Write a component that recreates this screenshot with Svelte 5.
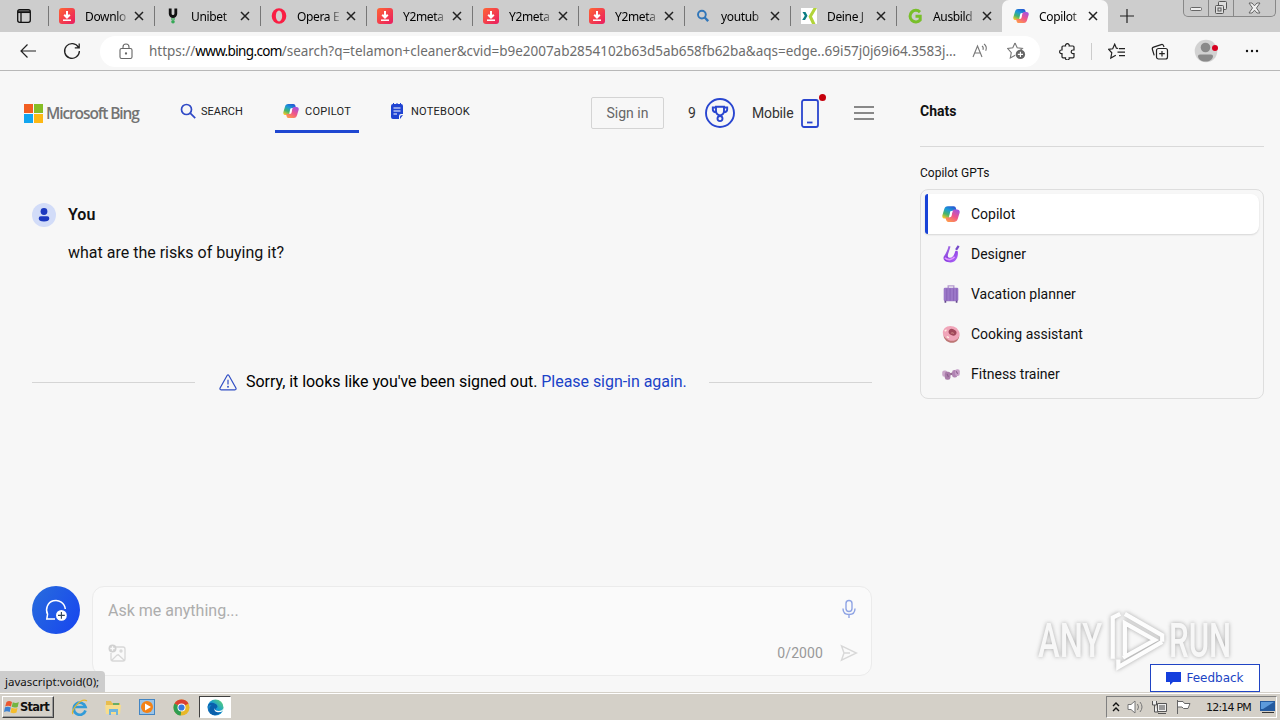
<script>
  const tabs = [
    { icon: 'download', title: 'Downlo' },
    { icon: 'unibet', title: 'Unibet' },
    { icon: 'opera', title: 'Opera E' },
    { icon: 'download', title: 'Y2meta' },
    { icon: 'download', title: 'Y2meta' },
    { icon: 'download', title: 'Y2meta' },
    { icon: 'search', title: 'youtub' },
    { icon: 'xing', title: 'Deine J' },
    { icon: 'g', title: 'Ausbild' },
    { icon: 'copilot', title: 'Copilot' }
  ];

  const gpts = [
    { icon: 'copilot', name: 'Copilot' },
    { icon: 'designer', name: 'Designer' },
    { icon: 'suitcase', name: 'Vacation planner' },
    { icon: 'donut', name: 'Cooking assistant' },
    { icon: 'dumbbell', name: 'Fitness trainer' }
  ];

  let activeTab = $state(9);
  let activeGpt = $state(0);
  let message = $state('');
</script>

{#snippet icon(name, size)}
  <svg class="icon" width={size} height={size} viewBox="0 0 16 16" fill="none">
    {#if name === 'download'}
      <rect width="16" height="16" rx="3" fill="url(#red)" />
      <path d="M8 3v6M5.2 6.7 8 9.5l2.8-2.8" stroke="#fff" stroke-width="2" />
      <path d="M4 12.2h8" stroke="#fff" stroke-width="1.5" />
    {:else if name === 'unibet'}
      <path d="M5.2.5v5.2a2.8 2.8 0 0 0 5.600 0V.5" stroke="#111" stroke-width="2.8" />
      <path d="M6 11h4" stroke="#36a957" stroke-width="1.3" />
      <circle cx="8" cy="13.8" r="1.8" fill="#36a957" />
    {:else if name === 'opera'}
      <ellipse cx="8" cy="8" rx="7.3" ry="7.7" fill="#fa1e43" />
      <ellipse cx="8" cy="8" rx="3.2" ry="5.4" fill="#d5cdcd" />
    {:else if name === 'search'}
      <circle cx="6.9" cy="6.6" r="3.9" stroke="#3176b9" stroke-width="1.9" />
      <path d="m9.7 9.5 3.5 3.6" stroke="#3176b9" stroke-width="2.4" />
    {:else if name === 'xing'}
      <path d="M0 0h16v16H0z" fill="#fff" />
      <path d="M1.5 4h3l2 3.8L4 12H1.2l2.6-4.2z" fill="#0a7d83" />
      <path d="M12.5 0H16l-5 8.4 3.5 7.6H11L7.5 8.4z" fill="#b2d43a" />
    {:else if name === 'g'}
      <path d="M13 4.1A5.8 5.8 0 1 0 13.2 12V8.3H8.5" stroke="#78bf2a" stroke-width="3" />
    {:else if name === 'copilot'}
      <path d="M5.2 1h5.1c1.3 0 1.8.7 2.1 1.8L13 5H9.7c-1.2 0-1.7.6-2 1.7l-1 3.7c-.3 1.1-1 1.6-2.2 1.6H2.6C.7 12-.1 10.7.4 8.9l1.5-5C2.5 1.9 3.3 1 5.2 1z" fill="url(#cool)" />
      <path d="M10.8 15H5.7c-1.3 0-1.8-.7-2.1-1.8L3 11h3.3c1.2 0 1.7-.6 2-1.7l1-3.7c.3-1.1 1-1.6 2.2-1.6h1.9c1.9 0 2.7 1.3 2.2 3.1l-1.5 5c-.6 2-1.4 2.9-3.3 2.9z" fill="url(#warm)" />
      <path d="m7.4 5.5 2-.2-1.2 5.1-2 .3z" fill="#fff" />
    {:else if name === 'designer'}
      <path d="M5.8.8 7.6 1.4 5.4 8c-.8 2.4.2 3.6 2 3.4 2.6-.3 3.4-2.9 4.6-6.3l2 .4c.8 4.6-1.3 10-6.4 10-4.4 0-7.4-2.6-5.9-5.4C3.3 7.5 5 4.6 5.8.8z" fill="url(#violet)" />
      <path d="m14.8.8-2.3 3.5" stroke="#7549ca" stroke-width="2" />
      <path d="M2.6 11.5c2.4 2.3 6.4 2 8.6-1" stroke="#df96ff" stroke-width="1.5" />
    {:else if name === 'suitcase'}
      <path d="M5.5 3V.8h5V3" stroke="#b59bcf" stroke-width="1.2" />
      <rect x="1.5" y="2.4" width="13" height="12" rx="1.2" fill="#9b78c8" />
      <path d="M4.2 3v11M7.2 3v11M10.2 3v11M13 3v11" stroke="#8c66ba" stroke-width="1" />
      <path d="M3 14v1.7M13 14v1.7" stroke="#64488a" stroke-width="1.5" />
    {:else if name === 'donut'}
      <ellipse cx="8.8" cy="9.2" rx="7" ry="6.3" fill="#bd7775" transform="rotate(20 8 8)" />
      <ellipse cx="8" cy="7.4" rx="7.6" ry="6.4" fill="#f0a5b9" transform="rotate(20 8 8)" />
      <ellipse cx="8.6" cy="6" rx="3.6" ry="2.8" fill="#a0475a" transform="rotate(25 8 8)" />
      <path d="M8 7.4c.8-.8 2-.5 2.400.4" stroke="#c98080" stroke-width="1" />
      <path d="M2.4 5.5 4 4.2M4.2 10.3l2 .9" stroke="#fff0e3" stroke-width="1.2" />
    {:else if name === 'dumbbell'}
      <path d="m3 9 10-2" stroke="#947193" stroke-width="2" />
      <rect x=".2" y="4.8" width="4.6" height="5.6" rx="1.8" fill="#c9a5c8" />
      <rect x="2.5" y="6" width="5" height="7" rx="2" fill="#a97ba9" />
      <rect x="9" y="4.5" width="4.6" height="6.6" rx="2" fill="#b083b2" />
      <rect x="11.6" y="3.8" width="4.2" height="6" rx="1.8" fill="#c69fc7" />
      <path d="m4.5 8 1.2 2.6M12.5 5.5 14 7.8" stroke="#8b5f8c" />
    {/if}
  </svg>
{/snippet}

<svg class="defs" aria-hidden="true">
  <defs>
    <linearGradient id="red" x1="0" y1="0" x2="1" y2="1">
      <stop stop-color="#ff6534" /><stop offset="1" stop-color="#e91c62" />
    </linearGradient>
    <linearGradient id="cool" x1=".7" y1="0" x2=".2" y2="1">
      <stop stop-color="#2458d3" /><stop offset=".35" stop-color="#1c9bd7" />
      <stop offset=".68" stop-color="#45b46b" /><stop offset="1" stop-color="#f5c928" />
    </linearGradient>
    <linearGradient id="warm" x1=".8" y1="0" x2=".2" y2="1">
      <stop stop-color="#a451e0" /><stop offset=".5" stop-color="#ef558a" /><stop offset="1" stop-color="#ff9c4b" />
    </linearGradient>
    <linearGradient id="violet" x1="0" y1="0" x2="1" y2="1">
      <stop stop-color="#b68bea" /><stop offset=".5" stop-color="#883bdf" /><stop offset="1" stop-color="#b870ff" />
    </linearGradient>
    <linearGradient id="edge" x1="0" y1="1" x2="1" y2="0">
      <stop stop-color="#1457a7" /><stop offset=".5" stop-color="#159bd7" /><stop offset="1" stop-color="#67db63" />
    </linearGradient>
  </defs>
</svg>

<div class="screen">
  <div class="tabstrip">
    <button class="workspace" aria-label="Tab actions">
      <svg width="16" height="16" viewBox="0 0 16 16" fill="none" stroke="#111" stroke-width="1.3">
        <rect x="1.7" y="1.7" width="12.6" height="12.6" rx="2" />
        <path d="M2 3.2h12M5 5v9" /><path d="M2 4.4h12" />
      </svg>
    </button>
    {#each tabs as tab, i}
      <div class="tab" class:active={i === activeTab}>
        <button class="tab-label" onclick={() => (activeTab = i)}>
          {@render icon(tab.icon, 16)}
          <span>{tab.title}</span>
        </button>
        <svg class="close" width="10" height="10" viewBox="0 0 10 10"><path d="m1 1 8 8m0-8L1 9" stroke="#222" stroke-width="1.5" /></svg>
      </div>
    {/each}
    <svg class="new-tab" width="14" height="14" viewBox="0 0 14 14"><path d="M7 0v14M0 7h14" stroke="#222" stroke-width="1.2" /></svg>
    <div class="window-buttons">
      <span><svg width="12" height="12" viewBox="0 0 12 12" fill="#eee" stroke="#666"><rect x=".5" y="5.5" width="11" height="3" rx="1" /></svg></span>
      <span><svg width="14" height="14" viewBox="0 0 14 14" fill="#ddd" stroke="#555"><rect x="4.5" y=".5" width="8" height="8" rx="1" /><rect x="1.5" y="4.5" width="8" height="8" rx="1" /><rect x="4" y="7" width="3" height="3" /></svg></span>
      <span><svg width="13" height="12" viewBox="0 0 13 12" fill="#eee" stroke="#666"><path d="M1 1h3l2.5 2.8L9 1h3L8.5 6l3.5 5H9L6.5 8.2 4 11H1l3.5-5z" /></svg></span>
    </div>
  </div>

  <div class="toolbar">
    <svg class="back" width="16" height="14" viewBox="0 0 16 14" fill="none" stroke="#222" stroke-width="1.2"><path d="M16 7H1M7.5.5 1 7l6.5 6.5" /></svg>
    <svg class="reload" width="18" height="18" viewBox="0 0 18 18" fill="none" stroke="#222" stroke-width="1.3"><path d="M15.5 5.4A7.4 7.4 0 1 0 16.4 9M16.2 1.5v4.4h-4.4" /></svg>
    <div class="address">
      <svg width="14" height="17" viewBox="0 0 14 17" fill="none" stroke="#666" stroke-width="1.1"><rect x="1" y="5.5" width="12" height="10" rx="1.6" /><path d="M4 5.5V4a3 3 0 0 1 6 0v1.5" /><circle cx="7" cy="10.5" r=".6" fill="#666" /></svg>
      <span class="url">https://<b>www.bing.com</b>/search?q=telamon+cleaner&amp;cvid=b9e2007ab2854102b63d5ab658fb62ba&amp;aqs=edge..69i57j0j69i64.3583j...</span>
      <svg class="read" width="17" height="16" viewBox="0 0 17 16" fill="none" stroke="#777" stroke-width="1.1"><path d="m1 14 4.5-11L10 14M2.7 10h5.6M10 3c1.3.9 1.5 2.3 1 3.8M12 1c2.4 1.8 2.8 4.2 1.7 6.7" /></svg>
      <svg class="star" width="19" height="18" viewBox="0 0 19 18" fill="none" stroke="#777" stroke-width="1.1"><path d="m8 1 2.2 4.7 5.2.7-3.8 3.5M8.2 13.2 3.3 16l1-5.4L.7 6.5l5.1-.8L8 1" /><circle cx="13.4" cy="12.4" r="4.7" fill="#666" stroke="none" /><path d="M13.4 9.8V15m-2.6-2.6H16" stroke="#fff" /></svg>
    </div>
    <svg class="puzzle" width="17" height="17" viewBox="0 0 17 17" fill="none" stroke="#222" stroke-width="1.2"><path d="M4 3h2.5a1.9 1.9 0 1 1 3.7 0H14q1 0 1 1v3h-1a1.8 1.8 0 1 0 0 3.6h1v3.2q0 1-1 1h-3.8a1.9 1.9 0 1 1-3.7 0H4q-1 0-1-1v-3.2h-.6a1.8 1.8 0 1 1 0-3.6H3V4q0-1 1-1z" /></svg>
    <i class="rule"></i>
    <svg class="favorites" width="18" height="17" viewBox="0 0 18 17" fill="none" stroke="#222" stroke-width="1.2"><path d="M10.2 5.5 8.4 5.2 6.7 1.2 4.7 5.8l-4 .5 3.1 3.5-1 5.2 5-2.7M11 5.7h6M9.5 9.2H17M11 12.7h6" /></svg>
    <svg class="collections" width="18" height="17" viewBox="0 0 18 17" fill="none" stroke="#222" stroke-width="1.2"><rect x="5.5" y="5.5" width="11" height="10.5" rx="2" /><path d="M11 8v5.5M8.2 10.7h5.6M3.2 12.4 1.4 6.5c-.4-1.2 0-2 1.2-2.4l7.6-2.5c1-.3 1.9 0 2.3 1L13 4" /></svg>
    <svg class="profile" width="24" height="24" viewBox="0 0 24 24"><circle cx="12" cy="12" r="11.3" fill="#d2d2d2" /><circle cx="11.5" cy="8.5" r="4.8" fill="#8a8a8a" /><path d="M4 17q0-1.5 2-1.5h11q2 0 2 1.5c0 3.500-3.500 5.500-7.500 5.500S4 20.500 4 17" fill="#8a8a8a" /><circle cx="21" cy="9" r="3" fill="#d70020" /></svg>
    <svg class="more" width="14" height="4" viewBox="0 0 14 4" fill="#111"><circle cx="2" cy="2" r="1.2" /><circle cx="7" cy="2" r="1.2" /><circle cx="12" cy="2" r="1.2" /></svg>
  </div>

  <div class="page">
    <main>
      <header>
        <div class="logo">
          <svg width="19" height="19" viewBox="0 0 19 19"><path d="M0 0h9v9H0z" fill="#f25e21" /><path d="M10 0h9v9h-9z" fill="#86bd24" /><path d="M0 10h9v9H0z" fill="#12a5ef" /><path d="M10 10h9v9h-9z" fill="#fdb813" /></svg>
          <span>Microsoft Bing</span>
        </div>
        <nav>
          <a class="nav-search" href="#search">
            <svg width="16" height="16" viewBox="0 0 16 16" fill="none" stroke="#304ac6" stroke-width="1.7"><circle cx="6.5" cy="6.5" r="5" /><path d="m10.2 10.2 5 5" /></svg>
            <span>SEARCH</span>
          </a>
          <a class="nav-copilot" href="#copilot">{@render icon('copilot', 16)}<span>COPILOT</span></a>
          <a class="nav-notebook" href="#notebook">
            <svg width="14" height="17" viewBox="0 0 14 17"><path d="M1 3q0-2 2-2h8q2 0 2 2v8h-2q-2 0-2 2v3H3q-2 0-2-2z" fill="#1f43d2" /><path d="M10 16v-2q0-2 3-2z" fill="#1f43d2" /><path d="M3.5 0v2M7 0v2M10.5 0v2" stroke="#1f43d2" /><path d="M3.5 5h7M3.5 8h7M3.5 11h3.5" stroke="#fff" stroke-width="1.2" /></svg>
            <span>NOTEBOOK</span>
          </a>
        </nav>
        <button class="signin">Sign in</button>
        <span class="points">9</span>
        <svg class="trophy" width="30" height="30" viewBox="0 0 30 30" fill="none" stroke="#2946d0" stroke-width="1.9"><circle cx="15" cy="15" r="14" /><path d="M11 8.8h8v4q0 4-4 4.6-4-.6-4-4.6zM11 9.5H7.8v2q0 2.5 3.7 3M19 9.5h3.2v2q0 2.5-3.7 3M15 17v2" /><circle cx="15" cy="20.6" r="2.5" /></svg>
        <span class="mobile">Mobile</span>
        <div class="phone">
          <svg width="18" height="29" viewBox="0 0 18 29" fill="none" stroke="#2a45ce" stroke-width="1.8"><rect x="1" y="1" width="16" height="27" rx="2" /><path d="M6 23.5h5.5" /></svg>
          <i></i>
        </div>
        <div class="menu"><i></i><i></i><i></i></div>
      </header>

      <section class="message">
        <div class="author">
          <svg width="24" height="24" viewBox="0 0 24 24"><circle cx="12" cy="12" r="12" fill="#d2dcf8" /><g fill="#1b38bf"><circle cx="12" cy="8.5" r="3.4" /><path d="M6.7 15.3q0-2 2-2h6.6q2 0 2 2 0 3.2-5.3 3.2t-5.3-3.2" /></g></svg>
          <h2>You</h2>
        </div>
        <p>what are the risks of buying it?</p>
      </section>

      <div class="notice">
        <hr />
        <svg width="18" height="17" viewBox="0 0 18 17" fill="none" stroke="#304ec4" stroke-width="1.2"><path d="M8.1 1.5q.9-1.4 1.8 0l7 12.5q.7 1.6-1 1.8H2.1q-1.7-.2-1-1.8zM9 5.8v4.8" /><circle cx="9" cy="12.8" r=".4" /></svg>
        <p><span>Sorry, it looks like you've been signed out.</span> <a href="#signin">Please sign-in again.</a></p>
        <hr />
      </div>

      <div class="composer">
        <button class="new-topic" aria-label="New topic">
          <svg width="24" height="24" viewBox="0 0 24 24" fill="none" stroke="#fff" stroke-width="1.5"><path d="M11 21H2.800l.8-4.800A9.400 9.400 0 1 1 21.300 11" /><circle cx="17.4" cy="17.4" r="5.4" fill="#fff" stroke="none" /><path d="M17.4 14v6.8M14 17.4h6.8" stroke="#345" stroke-width="1.1" /></svg>
        </button>
        <div class="input-box">
          <div class="input-row">
            <input placeholder="Ask me anything..." bind:value={message} />
            <svg class="mic" width="16" height="20" viewBox="0 0 16 20" fill="none" stroke="#8fa4e4" stroke-width="1.4"><rect x="5" y="1.5" width="6" height="11" rx="3" /><path d="M2 9.5q0 6 6 6t6-6M8 15.5V19" /></svg>
          </div>
          <div class="input-row">
            <svg width="18" height="18" viewBox="0 0 18 18" fill="none" stroke="#d8d8d8" stroke-width="1.3"><path d="M8 3h7q2 0 2 2v10q0 2-2 2H5q-2 0-2-2V9M4 16l5-5 1.3-.2L16 16" /><circle cx="13" cy="7" r="1" /><circle cx="4.5" cy="4.5" r="4" fill="#d1d1d1" stroke="none" /><path d="M4.5 2.3v4.4M2.3 4.5h4.4" stroke="#fafafa" /></svg>
            <span class="count">{message.length}/2000</span>
            <svg width="18" height="18" viewBox="0 0 18 18" fill="none" stroke="#d8d8d8" stroke-width="1.4"><path d="M1.5 1.8 16.5 9l-15 7.2L4 9zM4 9h6" /></svg>
          </div>
        </div>
      </div>
    </main>

    <aside>
      <h3>Chats</h3>
      <h4>Copilot GPTs</h4>
      <div class="gpts">
        {#each gpts as gpt, i}
          <button class="gpt" class:selected={i === activeGpt} onclick={() => (activeGpt = i)}>
            {@render icon(gpt.icon, 18)}
            <span>{gpt.name}</span>
          </button>
        {/each}
      </div>
    </aside>

    <div class="watermark">
      <span>ANY</span>
      <svg width="56" height="62" viewBox="0 0 60 66" fill="none" stroke="#fff" stroke-width="4.5"><path d="M4 53V9l8-4M17 49V15l32 18-34 19M17 5l40 23v7M10 54v8l47-27" /></svg>
      <span>RUN</span>
    </div>
    <button class="feedback">
      <svg width="15" height="13" viewBox="0 0 15 13"><path d="M0 0h15v10H7l-3 3v-3H0z" fill="#153fdd" /></svg>
      <span>Feedback</span>
    </button>
    <div class="status">javascript:void(0);</div>
  </div>

  <footer>
    <button class="start">
      <svg width="16" height="16" viewBox="0 0 16 16"><path d="M2.5 3Q5 1 8 3L7 7.5Q4 6 1.2 7.5z" fill="#eb5830" /><path d="M8.8 3.2q3 1.6 6-.2L13.7 8q-3 1.3-6-.2z" fill="#73b541" /><path d="M1 8.3q3-1.3 5.8.2L5.7 13Q3 11.5 0 13z" fill="#3d82d1" /><path d="M7.5 8.8q3 1.4 6 .1l-1 4.6q-3 1.4-6-.1z" fill="#f5bd2c" /></svg>
      <span>Start</span>
    </button>
    <div class="launch">
      <svg width="17" height="17" viewBox="0 0 17 17" fill="none"><path d="M14.5 11.5A6 6 0 1 1 14.5 8H4" stroke="#329bd8" stroke-width="2.7" /><path d="M2 15C-1 12 10-2 16 2" stroke="#e5b72e" stroke-width="1.3" /></svg>
      <svg width="17" height="17" viewBox="0 0 17 17"><path d="M1 2h5l1 2h8v9H1z" fill="#e8bd4e" /><path d="M8 4h6v2H8z" fill="#68ad65" /><path d="M0 6h16l-1 9H1z" fill="#f7dd8c" /><path d="M4 10h9v6h-2v-3H6v3H4z" fill="#6fb5dc" /></svg>
      <svg width="17" height="17" viewBox="0 0 17 17"><rect x=".5" y=".5" width="15" height="15" fill="#9bc4e7" stroke="#4385c3" /><circle cx="8" cy="8" r="6" fill="#f48216" /><path d="m6 4.5 6 3.5-6 3.5z" fill="#fff" /></svg>
      <svg width="17" height="17" viewBox="0 0 17 17"><circle cx="8.5" cy="8.5" r="8" fill="#e8b829" /><path d="M8.5 8.5 1.5 4.6a8 8 0 0 1 14 0z" fill="#db3f32" /><path d="M8.5 8.5 1.5 4.6a8 8 0 0 0 6.2 11.9z" fill="#2e9d52" /><circle cx="8.5" cy="8.5" r="4" fill="#fff" /><circle cx="8.5" cy="8.5" r="3.1" fill="#3878de" /></svg>
    </div>
    <div class="running">
      <svg width="17" height="17" viewBox="0 0 17 17"><circle cx="8.5" cy="8.5" r="8" fill="url(#edge)" /><path d="M.5 8q1-5 6-4 4 1 4 4l-2 2q0 3 6 3-7 6-11 1-3-4 1-8-3 0-4 2" fill="#0960ac" /><path d="M7.7 9q-.2 3 4.2 3 2.7 0 4.3-2l-.5 2q-3 2-6 1-3-1-2-4" fill="#fff" /></svg>
    </div>
    <div class="tray">
      <svg width="8" height="12" viewBox="0 0 8 12" fill="none" stroke="#111" stroke-width="1.4"><path d="m1 5 3-3 3 3M1 10l3-3 3 3" /></svg>
      <svg width="17" height="16" viewBox="0 0 17 16" fill="#fff" stroke="#777"><path d="M1 5.5h3L8 2v12L4 10.5H1z" /><path d="M10.5 5q2 3 0 6M13 3q4 5 0 10" fill="none" /></svg>
      <svg width="17" height="16" viewBox="0 0 17 16" fill="#eee" stroke="#555"><path d="M6.5 4.5h9v8h-9zM7 14.5h8M1.5 2v4h4V2M3.5 6v7h4" /><path d="M8 6h6v5H8z" fill="#999" stroke="none" /></svg>
      <svg width="17" height="16" viewBox="0 0 17 16" fill="#fff" stroke="#666"><path d="M2.5 15V1M2.5 2.5H8l1.5 2H15l-2 5H8.5L7 8H2.5z" /></svg>
      <time>12:14 PM</time>
      <svg width="15" height="13" viewBox="0 0 15 13"><path d="M0 0h15v10H0z" fill="#255b9f" /><path d="M1 1h13L3 8H1z" fill="#5d9bdc" /><path d="M2 11h12v1H2z" fill="#333" /></svg>
    </div>
  </footer>
</div>

<style>
  :global(body) {
    background: #f7f7f7;
    overflow: hidden;
  }

  * {
    box-sizing: border-box;
  }

  button {
    border: 0;
    background: none;
    padding: 0;
    font: inherit;
    color: inherit;
  }

  a {
    text-decoration: none;
    color: inherit;
  }

  h2, h3, h4, p {
    margin: 0;
  }

  svg {
    display: block;
    flex: none;
  }

  .defs {
    position: absolute;
    width: 0;
    height: 0;
  }

  .screen {
    width: 1280px;
    height: 720px;
    display: flex;
    flex-direction: column;
    overflow: hidden;
    color: #111;
    font-family: Roboto, sans-serif;
  }

  .tabstrip {
    height: 32px;
    flex: none;
    display: flex;
    background: #cdcdcd;
    font: 12px "Noto Sans", sans-serif;
  }

  .workspace {
    width: 48px;
    flex: none;
    padding: 0 0 0 16px;
  }

  .tab {
    width: 106px;
    flex: none;
    display: flex;
    align-items: center;
    background: linear-gradient(#777, #777) 0 6px / 1px 20px no-repeat;
  }

  .tab-label {
    display: flex;
    align-items: center;
    gap: 10px;
    margin-left: 11px;
    color: #000;
  }

  .tab-label span {
    width: 46px;
    text-align: left;
    white-space: nowrap;
    letter-spacing: -0.35px;
    -webkit-mask-image: linear-gradient(90deg, #000 68%, #0004 90%);
    mask-image: linear-gradient(90deg, #000 68%, #0004 90%);
  }

  .close {
    margin-left: 3px;
  }

  .tab.active {
    background: #f7f7f7;
    border-radius: 7px 7px 0 0;
  }

  .new-tab {
    margin: 9px 0 0 12px;
  }

  .window-buttons {
    display: flex;
    height: 17px;
    margin-left: auto;
    margin-right: 4px;
    border: 1px solid #888;
    border-top: 0;
    border-radius: 0 0 5px 5px;
    background: #c9c9c9;
  }

  .window-buttons span {
    width: 25px;
    display: flex;
    justify-content: center;
    align-items: center;
    border-right: 1px solid #888;
  }

  .window-buttons span:last-child {
    width: 41px;
    border: 0;
  }

  .toolbar {
    height: 39px;
    flex: none;
    display: flex;
    align-items: center;
    background: #f7f7f7;
    border-bottom: 1px solid #b8b8b8;
  }

  .back {
    margin-left: 20px;
  }

  .reload {
    margin: 0 19px 0 27px;
  }

  .address {
    width: 940px;
    height: 31px;
    display: flex;
    align-items: center;
    padding: 0 14px 0 19px;
    border-radius: 16px;
    background: #fff;
  }

  .url {
    width: 812px;
    margin-left: 16px;
    white-space: nowrap;
    color: #6d6d6d;
    font: 13.5px "Noto Sans", sans-serif;
    letter-spacing: -0.03px;
  }

  .url b {
    font-weight: normal;
    color: #000;
    letter-spacing: -0.65px;
  }

  .read {
    margin-left: 11px;
  }

  .star {
    margin-left: auto;
  }

  .puzzle {
    margin-left: 19px;
  }

  .rule {
    height: 17px;
    margin-left: 15px;
    border-left: 1px solid #ccc;
  }

  .favorites {
    margin-left: 16px;
  }

  .collections {
    margin-left: 25px;
  }

  .profile {
    margin-left: 25px;
  }

  .more {
    margin-left: 27px;
  }

  .page {
    position: relative;
    height: 621px;
    flex: none;
    display: flex;
    background: #f7f7f7;
  }

  main {
    width: 888px;
    flex: none;
    display: flex;
    flex-direction: column;
  }

  header {
    height: 62px;
    flex: none;
    display: flex;
    align-items: center;
    padding: 22px 0 0 24px;
    font-size: 14px;
    color: #333;
  }

  .logo {
    width: 156px;
    display: flex;
    align-items: center;
    gap: 3px;
    color: #737373;
    font: 600 15.5px "Open Sans", sans-serif;
    letter-spacing: -1.1px;
    white-space: nowrap;
  }

  nav {
    width: 411px;
    height: 40px;
    display: flex;
    font-size: 11px;
    letter-spacing: 0.25px;
    color: #222;
  }

  nav a {
    height: 40px;
    display: flex;
    align-items: center;
    gap: 6px;
    padding-bottom: 1px;
    border-bottom: 3px solid transparent;
  }

  .nav-search {
    width: 95px;
    gap: 5px;
    letter-spacing: 0;
  }

  .nav-copilot {
    width: 84px;
    padding-left: 8px;
    border-color: #1f47d1;
  }

  .nav-notebook {
    margin-left: 31px;
    gap: 7px;
  }

  .signin {
    width: 73px;
    height: 32px;
    border: 1px solid #d4d4d4;
    border-radius: 2px;
    color: #666;
  }

  .points {
    width: 17px;
    margin-left: 24px;
  }

  .mobile {
    width: 49px;
    margin-left: 17px;
    letter-spacing: -0.15px;
  }

  .phone {
    position: relative;
  }

  .phone i {
    position: absolute;
    width: 7px;
    height: 7px;
    right: -7px;
    top: -5px;
    border-radius: 50%;
    background: #c6000c;
  }

  .menu {
    width: 20px;
    margin-left: 35px;
    display: grid;
    gap: 4px;
  }

  .menu i {
    height: 2px;
    background: #888;
  }

  .message {
    margin: 70px 0 0 32px;
    font-size: 16px;
    line-height: 24px;
  }

  .author {
    display: flex;
    gap: 12px;
  }

  .author h2 {
    font-size: 16px;
    font-weight: 600;
  }

  .message p {
    margin: 14px 0 0 36px;
  }

  .notice {
    height: 24px;
    width: 840px;
    margin: 105px 0 0 32px;
    display: flex;
    align-items: center;
    font-size: 16px;
    color: #000;
  }

  .notice hr {
    width: 163px;
    flex: none;
    margin: 0;
    border: 0;
    border-top: 1px solid #d5d5d5;
  }

  .notice svg {
    margin-left: 24px;
  }

  .notice p {
    width: 472px;
    padding: 0 0 2px 9px;
    white-space: nowrap;
    letter-spacing: -0.04px;
  }

  .notice a {
    color: #1b43c8;
  }

  .composer {
    display: flex;
    gap: 12px;
    margin: auto 0 16px 32px;
  }

  .new-topic {
    width: 48px;
    height: 48px;
    display: grid;
    place-items: center;
    border-radius: 50%;
    background: linear-gradient(120deg, #286ddc, #1744f0);
  }

  .input-box {
    width: 780px;
    height: 90px;
    display: flex;
    flex-direction: column;
    gap: 21px;
    padding: 12px 13px 0 15px;
    border: 1px solid #ebebeb;
    border-radius: 12px;
    background: #fafafa;
  }

  .input-row {
    height: 22px;
    display: flex;
    align-items: center;
  }

  .input-row input {
    flex: 1;
    border: 0;
    padding: 0;
    outline: 0;
    background: none;
    font: 16px Roboto, sans-serif;
  }

  .input-row input::placeholder {
    color: #adadad;
  }

  .mic {
    margin: 0 1px 3px 0;
  }

  .count {
    margin-left: auto;
    margin-right: 17px;
    color: #999;
    font-size: 14px;
    letter-spacing: 0.1px;
  }

  aside {
    width: 344px;
    margin-left: 32px;
  }

  aside h3 {
    height: 76px;
    padding-top: 32px;
    border-bottom: 1px solid #d9d9d9;
    font-size: 14px;
    font-weight: 700;
    line-height: 16px;
  }

  aside h4 {
    margin: 18px 0 7px;
    font-size: 12px;
    font-weight: 400;
    line-height: 17px;
  }

  .gpts {
    height: 210px;
    padding: 4px;
    border: 1px solid #dedede;
    border-radius: 8px;
  }

  .gpt {
    width: 100%;
    height: 40px;
    display: flex;
    align-items: center;
    gap: 11px;
    padding-left: 17px;
    font-size: 14px;
  }

  .gpt.selected {
    padding-left: 14px;
    border-left: 3px solid #1843d7;
    border-radius: 3px 8px 8px 3px;
    background: #fff;
    box-shadow: 0 1px 2px #0002;
  }

  .watermark {
    position: absolute;
    left: 1038px;
    top: 538px;
    display: flex;
    align-items: center;
    gap: 4px;
    color: #f8f8f8;
    opacity: 0.85;
    filter: drop-shadow(0 0 2px #999);
    font: 500 48px "Roboto", sans-serif;
  }

  .watermark span {
    width: 67px;
    transform: scaleX(0.68);
    transform-origin: left;
  }

  .watermark span:last-child {
    transform: scaleX(0.65);
  }

  .feedback {
    position: absolute;
    left: 1150px;
    top: 593px;
    width: 110px;
    height: 28px;
    display: flex;
    align-items: center;
    justify-content: center;
    gap: 5px;
    border: 1px solid #2044c4;
    background: #fff;
    color: #2044c4;
    font: 12px "DejaVu Sans", sans-serif;
  }

  .status {
    position: absolute;
    left: 0;
    bottom: 0;
    width: 105px;
    height: 21px;
    padding-left: 5px;
    border-radius: 0 4px 0 0;
    background: #cdcdcd;
    font: 11.5px/22px "Noto Sans", sans-serif;
    white-space: nowrap;
  }

  footer {
    height: 28px;
    flex: none;
    display: flex;
    align-items: center;
    padding: 3px 3px 1px 2px;
    background: linear-gradient(#d4d0c8 1px, #fff 1px, #fff 2px, #d4d0c8 2px);
  }

  .start {
    width: 52px;
    height: 22px;
    display: flex;
    align-items: center;
    padding-left: 1px;
    border: 1px solid;
    border-color: #fff #404040 #404040 #fff;
    box-shadow: inset -1px -1px #999;
    font: bold 11.5px "DejaVu Sans", sans-serif;
    letter-spacing: -0.75px;
  }

  .launch {
    width: 145px;
    display: flex;
    gap: 17px;
    padding-left: 17px;
  }

  .running {
    width: 32px;
    height: 22px;
    display: grid;
    place-items: center;
    border: 1px solid;
    border-color: #404040 #fff #fff #404040;
    background: #fff;
  }

  .tray {
    width: 171px;
    height: 22px;
    display: flex;
    align-items: center;
    gap: 7px;
    margin-left: auto;
    padding-left: 5px;
    border: 1px solid;
    border-color: #808080 #fff #fff #808080;
    font: 11px "DejaVu Sans", sans-serif;
  }

  .tray time {
    width: 47px;
    margin-left: 7px;
    white-space: nowrap;
    letter-spacing: -0.8px;
  }
</style>
